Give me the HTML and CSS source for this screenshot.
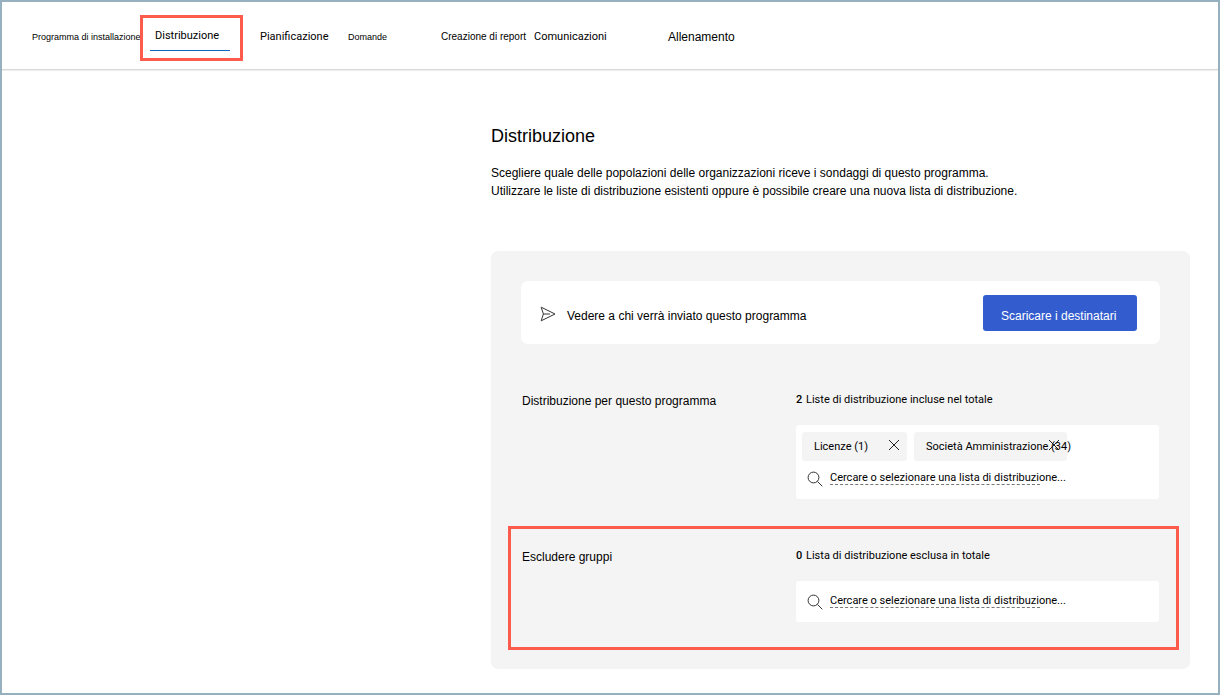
FILE: index.html
```html
<!DOCTYPE html>
<html lang="it">
<head>
<meta charset="utf-8">
<title>Distribuzione</title>
<link rel="stylesheet" href="styles.css">
</head>
<body>
<header class="topbar">
  <nav class="tabs">
    <a class="tab tab-tiny" href="#">Programma di installazione</a>
    <a class="tab tab-active" href="#" aria-current="page">Distribuzione</a>
    <a class="tab" href="#">Pianificazione</a>
    <a class="tab tab-tiny" href="#">Domande</a>
    <a class="tab tab-small" href="#">Creazione di report</a>
    <a class="tab" href="#">Comunicazioni</a>
    <a class="tab tab-wide" href="#">Allenamento</a>
  </nav>
</header>
<main class="content">
  <h1 class="title">Distribuzione</h1>
  <p class="intro">Scegliere quale delle popolazioni delle organizzazioni riceve i sondaggi di questo programma.<br>Utilizzare le liste di distribuzione esistenti oppure è possibile creare una nuova lista di distribuzione.</p>
  <section class="panel">
    <div class="card">
      <svg class="send" viewBox="0 0 16 16" aria-hidden="true"><path d="M1.2 1.2 15 8 1.2 14.8 3.4 8zM3.4 8H10"/></svg>
      <span class="card-text">Vedere a chi verrà inviato questo programma</span>
      <button class="primary" type="button">Scaricare i destinatari</button>
    </div>
    <div class="row">
      <label class="row-label" for="include">Distribuzione per questo programma</label>
      <div class="field">
        <p class="count"><span class="number">2</span>Liste di distribuzione incluse nel totale</p>
        <div class="picker">
          <div class="chips">
            <span class="chip chip-short">Licenze (1)<button class="remove" type="button" aria-label="Rimuovi Licenze"><svg class="cross" viewBox="0 0 12 12"><path d="M1 1l10 10M11 1 1 11"/></svg></button></span>
            <span class="chip chip-long">Società Amministrazione (34)<button class="remove" type="button" aria-label="Rimuovi Società Amministrazione"><svg class="cross" viewBox="0 0 12 12"><path d="M1 1l10 10M11 1 1 11"/></svg></button></span>
          </div>
          <div class="search">
            <svg class="lens" viewBox="0 0 16 16" aria-hidden="true"><circle cx="6.5" cy="6.5" r="5.4"/><path d="M10.4 10.4 15.3 15.3"/></svg>
            <input class="search-input" id="include" type="text" placeholder="Cercare o selezionare una lista di distribuzione...">
          </div>
        </div>
      </div>
    </div>
    <div class="row row-marked">
      <label class="row-label" for="exclude">Escludere gruppi</label>
      <div class="field">
        <p class="count"><span class="number">0</span>Lista di distribuzione esclusa in totale</p>
        <div class="picker">
          <div class="search">
            <svg class="lens" viewBox="0 0 16 16" aria-hidden="true"><circle cx="6.5" cy="6.5" r="5.4"/><path d="M10.4 10.4 15.3 15.3"/></svg>
            <input class="search-input" id="exclude" type="text" placeholder="Cercare o selezionare una lista di distribuzione...">
          </div>
        </div>
      </div>
    </div>
  </section>
</main>
</body>
</html>
```

FILE: styles.css
```css
* { box-sizing: border-box; }

body {
  margin: 0;
  min-height: 100vh;
  border: 2px solid #96b0be;
  background: #fff;
  color: #000;
  font: 12px/18px "Liberation Sans", Arial, sans-serif;
}

.topbar {
  padding: 0 30px;
  border-bottom: 1px solid #d8d8d8;
  box-shadow: 0 1px 1px #efefef;
}

.tabs {
  display: grid;
  grid-template-columns: 118px 110px 88px 93px 93px 134px 1fr;
  align-items: center;
  height: 67px;
  padding-top: 2px;
}

.tab {
  position: relative;
  color: #000;
  font: 11px/18px Roboto, "Liberation Sans", sans-serif;
  text-decoration: none;
  white-space: nowrap;
}

.tab-tiny { font: 9px/18px "Liberation Sans", Arial, sans-serif; }
.tab-small { font: 10px/18px "Liberation Sans", Arial, sans-serif; }
.tab-wide { font: 12px/18px "Liberation Sans", Arial, sans-serif; }

.tab-active {
  width: 80px;
  padding: 0 5px 5px;
  margin-top: 4px;
  border-bottom: 1px solid #1267c0;
}

.tab-active::after {
  content: "";
  position: absolute;
  inset: -12px -13px -11px -10px;
  border: 3px solid #fd5b4b;
}

.content { padding: 54px 28px 24px 489px; }

.title {
  margin: 0 0 16px;
  font-size: 18px;
  line-height: 24px;
  font-weight: 400;
}

.intro { margin: 0 0 51px; white-space: nowrap; }

.panel {
  padding: 30px 30px 19px;
  border-radius: 7px;
  background: #f4f4f4;
}

.card {
  display: flex;
  align-items: center;
  padding: 14px 23px 13px 19px;
  border-radius: 7px;
  background: #fff;
}

.send {
  width: 16px;
  height: 16px;
  margin: 2px 11px 0 0;
  fill: none;
  stroke: #333;
  stroke-width: 1;
  stroke-linejoin: round;
}

.card-text { flex: 1; padding-top: 5px; }

.primary {
  width: 154px;
  height: 36px;
  padding: 5px 18px 0;
  border: 0;
  border-radius: 3px;
  background: #335dce;
  color: #fff;
  font: inherit;
  text-align: left;
  white-space: nowrap;
}

.row {
  display: grid;
  grid-template-columns: 275px 1fr;
  padding-right: 1px;
  margin-top: 47px;
}

.row-label { padding: 1px 0 0 1px; }

.row-marked {
  margin: 27px -19px 0 -13px;
  padding: 18px 17px 25px 10px;
  border: 3px solid #fd5b4b;
}

.field { font: 11px/18px Roboto, "Liberation Sans", sans-serif; }

.count { margin: 0 0 16px; }

.number {
  display: inline-block;
  width: 10px;
  font-weight: 500;
}

.picker {
  padding: 4px 6px;
  border-radius: 3px;
  background: #fff;
}

.chips {
  display: flex;
  gap: 7px;
  padding: 3px 0 1px;
}

.chip {
  position: relative;
  height: 29px;
  padding-left: 12px;
  border-radius: 3px;
  background: #f4f4f4;
  line-height: 29px;
  white-space: nowrap;
}

.chip-short { width: 105px; }
.chip-long { width: 153px; }

.remove {
  position: absolute;
  top: 6px;
  right: 6px;
  display: flex;
  padding: 1px;
  border: 0;
  background: none;
}

.cross {
  width: 12px;
  height: 12px;
  fill: none;
  stroke: #222;
  stroke-width: 1;
}

.search {
  position: relative;
  display: flex;
  align-items: center;
  gap: 7px;
  height: 33px;
  padding-left: 5px;
}

.lens {
  width: 16px;
  height: 16px;
  fill: none;
  stroke: #333;
  stroke-width: 1;
}

.search-input {
  flex: 1;
  min-width: 0;
  padding: 0 0 2px;
  border: 0;
  outline: 0;
  background: none;
  color: #000;
  font: inherit;
}

.search-input::placeholder { color: #000; opacity: 1; }

.search::after {
  content: "";
  position: absolute;
  left: 28px;
  bottom: 10px;
  width: 210px;
  border-bottom: 1px dashed #777;
}
```
